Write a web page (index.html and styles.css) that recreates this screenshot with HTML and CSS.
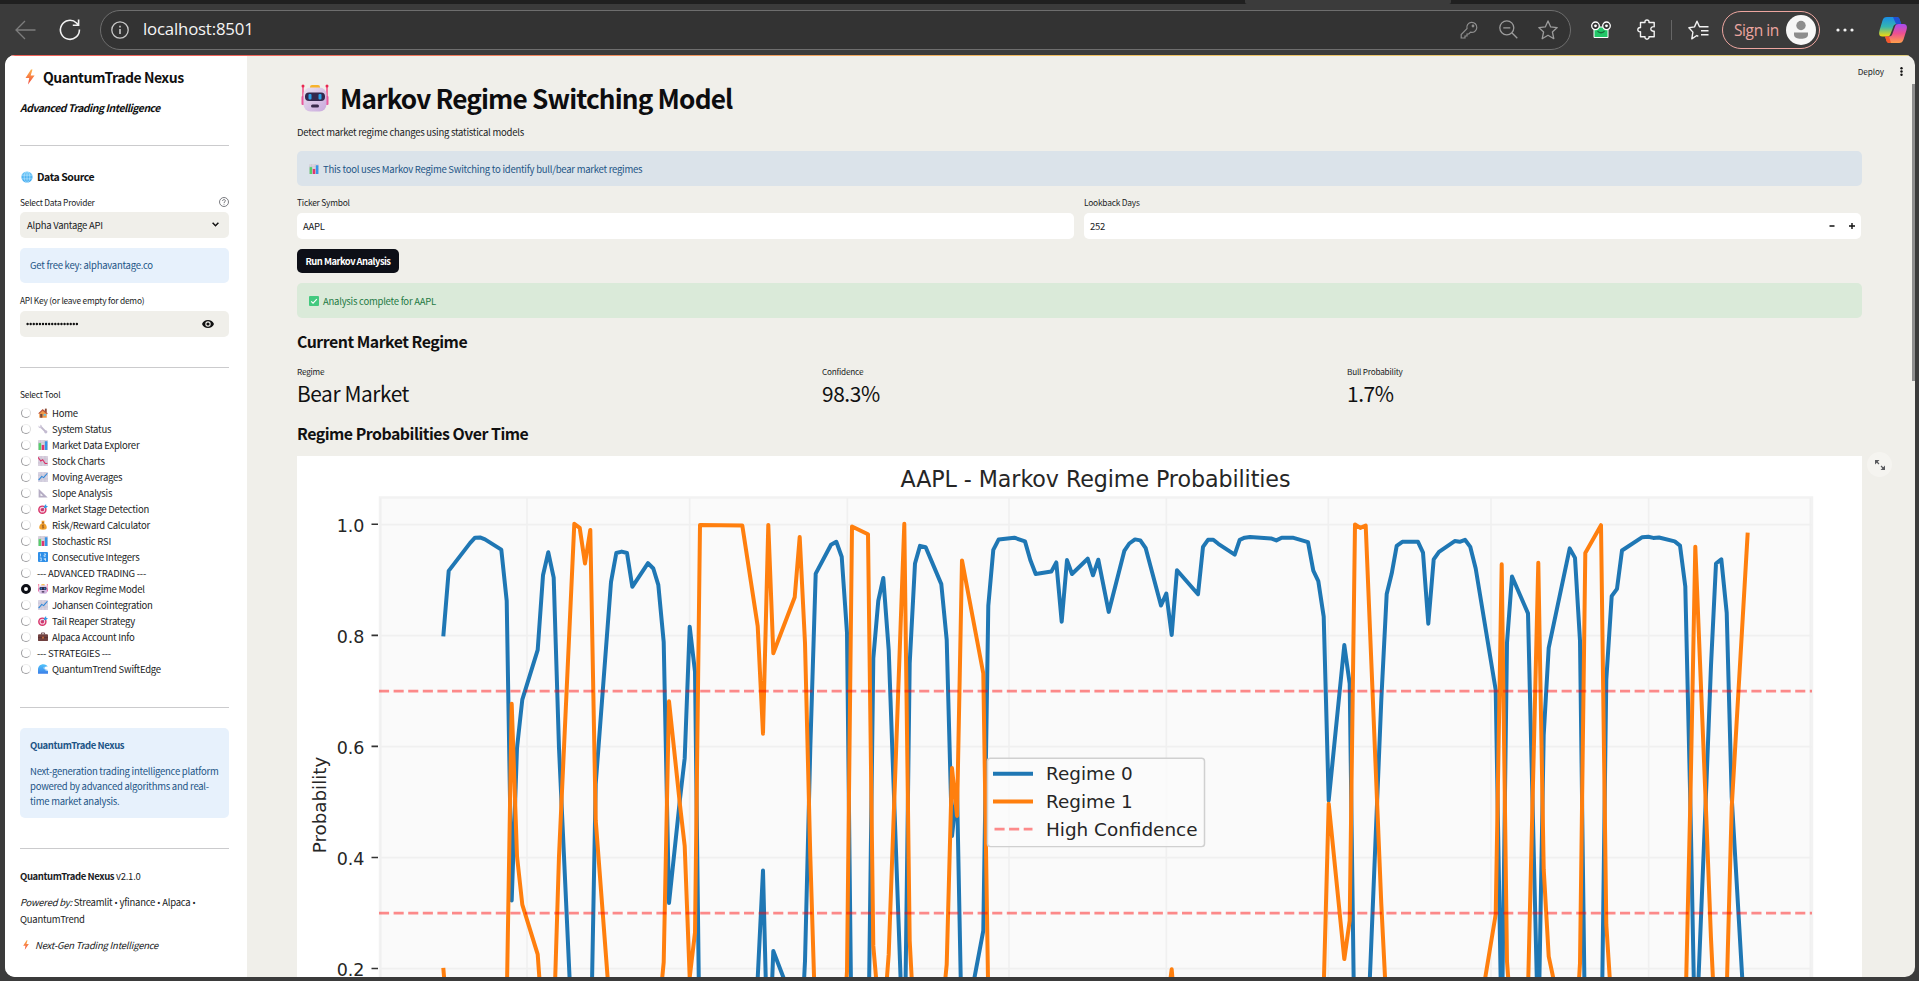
FILE: index.html
```html
<!DOCTYPE html>
<html lang="en">
<head>
<meta charset="utf-8">
<title>QuantumTrade Nexus</title>
<link rel="stylesheet" href="styles.css">
</head>
<body>
<svg class="defs" aria-hidden="true">
  <linearGradient id="gBolt" x1="0" y1="0" x2="0" y2="1"><stop offset="0" stop-color="#fcb24a"/><stop offset="1" stop-color="#f2493f"/></linearGradient>
  <linearGradient id="gFace" x1="0" y1="0" x2="1" y2="1"><stop offset="0" stop-color="#e9e2f0"/><stop offset="1" stop-color="#c9a8dc"/></linearGradient>
  <linearGradient id="gGlobe" x1="0" y1="0" x2="0" y2="1"><stop offset="0" stop-color="#6bc5f7"/><stop offset="1" stop-color="#3aa5ee"/></linearGradient>
  <linearGradient id="gWave" x1="0" y1="0" x2="0" y2="1"><stop offset="0" stop-color="#4fc3fb"/><stop offset="1" stop-color="#3b7fe8"/></linearGradient>
  <linearGradient id="gC1" x1="0" y1="0" x2="0" y2="1"><stop offset="0" stop-color="#1a8de6"/><stop offset=".5" stop-color="#35b6b0"/><stop offset="1" stop-color="#f5d90a"/></linearGradient>
  <linearGradient id="gC2" x1="0" y1="0" x2="0" y2="1"><stop offset="0" stop-color="#a64bf0"/><stop offset=".5" stop-color="#ee5090"/><stop offset="1" stop-color="#ffa04a"/></linearGradient>
  <symbol id="bolt" viewBox="0 0 16 16"><path d="M9 .5 3.500 9h3.700L6 15.500 12.600 6.500H8.700L10.500.5Z" fill="url(#gBolt)"/></symbol>
  <symbol id="robot" viewBox="0 0 28 28"><path d="M2 2v18M26 2v18" stroke="#f0407f" stroke-width="1.400"/><circle cx="2" cy="2" r="1.500" fill="#e8284f"/><circle cx="26" cy="2" r="1.500" fill="#e8284f"/><rect x=".5" y="12" width="4" height="9" rx="1" fill="#e8589c"/><rect x="23.500" y="12" width="4" height="9" rx="1" fill="#e8589c"/><rect x="9" y="1" width="10" height="5" rx="2" fill="#f7b32b"/><rect x="2.500" y="3.500" width="23" height="24" rx="7" fill="url(#gFace)"/><rect x="4" y="8.500" width="20" height="8.500" rx="4" fill="#33294d"/><rect x="7.500" y="10" width="3" height="5.500" rx="1" fill="#2ba0e6"/><rect x="17.500" y="10" width="3" height="5.500" rx="1" fill="#2ba0e6"/><rect x="10" y="20.500" width="8" height="3" rx="1.500" fill="#3a2b4d"/></symbol>
  <symbol id="globe" viewBox="0 0 16 16"><circle cx="8" cy="8" r="7.500" fill="url(#gGlobe)"/><g fill="none" stroke="#c4edff" stroke-width=".8"><path d="M1 5.500h14M1 10.500h14M8 .5v15"/><ellipse cx="8" cy="8" rx="3.800" ry="7.500"/></g></symbol>
  <symbol id="bars" viewBox="0 0 16 16"><rect width="16" height="16" rx="1" fill="#d8d3de"/><path d="M0 4h16M0 8h16M4 0v16M10 0v16" stroke="#bfb9c9" stroke-width=".5"/><rect x="1" y="5" width="4" height="11" fill="#55cf6a"/><rect x="6" y="8" width="4" height="8" fill="#e0356f"/><rect x="11" y="2" width="4" height="14" fill="#3694e8"/></symbol>
  <symbol id="down" viewBox="0 0 16 16"><rect width="16" height="16" rx="1" fill="#d8d0de"/><path d="M0 5h16M0 11h16M5 0v16M11 0v16" stroke="#beb5c9" stroke-width=".7"/><path d="m0 2 4.500 6 3-2 4 6H15" fill="none" stroke="#db2e65" stroke-width="1.800"/></symbol>
  <symbol id="up" viewBox="0 0 16 16"><rect width="16" height="16" rx="1" fill="#d8d3e2"/><path d="M0 5h16M0 11h16M5 0v16M11 0v16" stroke="#bdb8cc" stroke-width=".7"/><path d="m1 13 5-6 3 2 6-7" fill="none" stroke="#2c86d8" stroke-width="1.800"/></symbol>
  <symbol id="home" viewBox="0 0 16 16"><path d="M2 8v7.500h12V8L8 3Z" fill="#f09a4a"/><path d="M11 1h3v6h-3z" fill="#8a4b36"/><path d="m.5 8.500 7-7 8 7-1 1.500-7-5.500-6 5Z" fill="#b8513a"/><rect x="3.500" y="9.500" width="3.500" height="6" fill="#7b4536"/><rect x="9" y="9.500" width="3.500" height="3" fill="#62c4e8"/></symbol>
  <symbol id="wrench" viewBox="0 0 16 16"><path d="m4 4 8.500 8.500" stroke="#c0b8cc" stroke-width="3" stroke-linecap="round"/><circle cx="3.500" cy="4" r="2.800" fill="#cfc8da"/><circle cx="12.500" cy="12.500" r="2.500" fill="#c4bcd2"/><circle cx="2.300" cy="2.600" r="1.400" fill="#fff"/></symbol>
  <symbol id="ruler" viewBox="0 0 16 16"><path fill-rule="evenodd" d="M1 1v14h14.500ZM4 8.500l4 4H4Z" fill="#b5adc4"/></symbol>
  <symbol id="target" viewBox="0 0 16 16"><circle cx="7" cy="9" r="6.800" fill="#d8356b"/><circle cx="7" cy="9" r="4.500" fill="#f3d4e2"/><circle cx="7" cy="9" r="2.800" fill="#d8356b"/><path d="M7 9 13 3" stroke="#4a6ea8"/><path d="m10 3 3-3v3h3l-3 3.500h-3Z" fill="#2f9de8"/></symbol>
  <symbol id="bag" viewBox="0 0 16 16"><path d="M5.500 1h5L9.500 5c3 1.500 4.500 4 4.500 7 0 2.500-1.500 3.500-6 3.500S2 14.500 2 12c0-3 1.500-5.500 4.500-7Z" fill="#f0a12c"/><path d="M6 4.500h4" stroke="#8a4b20" stroke-width="1.300"/><path d="M9.500 8.500C7 7.500 6 10 8 10.500s1.500 2.800-1.500 2M8 7.500v6" fill="none" stroke="#8a4b20"/></symbol>
  <symbol id="nums" viewBox="0 0 16 16"><rect width="16" height="16" rx="1.500" fill="#2f8fe8"/><path d="M4 2.500v4.500M9.500 3h2.500v2H9.700v2h2.500M3 9.500h2.500l-1 2 1 .5v2H3M10 9.500v2.500h2.500M12 9.500v5" fill="none" stroke="#e4f3ff" stroke-width="1.100"/></symbol>
  <symbol id="case" viewBox="0 0 16 16"><path d="M5.500 4V1.500h5V4" fill="none" stroke="#5a3038" stroke-width="1.300"/><rect y="3.500" width="16" height="11" rx="1.500" fill="#70403f"/><path d="M0 9h16" stroke="#4c282d"/><rect x="6.500" y="7.500" width="3" height="3" fill="#c46b3d"/></symbol>
  <symbol id="wave" viewBox="0 0 16 16"><path d="M0 15.500V9C0 4 3.500.5 8.500.5c3.500 0 6 1.500 7 4-2-1.200-4-.8-4.500 1-.5 2 1.500 4 5 4v6Z" fill="url(#gWave)"/><path d="M10.500 4.500c-2 2 0 5.500 5.500 6" fill="none" stroke="#e8f7ff" stroke-width="1.200"/></symbol>
  <symbol id="check" viewBox="0 0 16 16"><rect width="16" height="16" rx="1.500" fill="#43c97f"/><path d="m3.500 8.500 3 3 6-6.500" fill="none" stroke="#fff" stroke-width="1.800"/></symbol>
</svg>

<header class="browser">
  <div class="tabs"><div class="tab-active"></div></div>
  <div class="toolbar">
    <svg class="i-back" width="21" height="20" viewBox="0 0 21 20" fill="none" stroke="#7d7d7d" stroke-width="1.300"><path d="M20.500 10H1M10 1 1 10l9 9"/></svg>
    <svg class="i-reload" width="22" height="22" viewBox="0 0 22 22" fill="none" stroke="#f2f2f2" stroke-width="1.600"><path d="M20.400 10.500A9.500 9.500 0 1 1 17.500 4L19.500 6M19.600.5v5.800h-5.800"/></svg>
    <div class="address">
      <svg width="18" height="18" viewBox="0 0 18 18" fill="none" stroke="#c9c9c9" stroke-width="1.300"><circle cx="9" cy="9" r="8.200"/><path d="M9 8v5M9 4.800v1.700" stroke-width="1.600"/></svg>
      <span class="url">localhost:8501</span>
      <svg class="i-key" width="18" height="18" viewBox="0 0 18 18" fill="none" stroke="#8f8f8f" stroke-width="1.200"><path d="M7 7.700a5 5 0 1 1 3.600 3.500L8.800 13H7v2H5v2H1.200v-3.400Z"/><circle cx="13" cy="5" r=".8" fill="#8f8f8f"/></svg>
      <svg class="i-zoom" width="19" height="19" viewBox="0 0 19 19" fill="none" stroke="#9c9c9c" stroke-width="1.300"><circle cx="7.800" cy="7.800" r="7"/><path d="m12.800 12.800 5.500 5.500M4.300 7.800h7"/></svg>
      <svg class="i-star" width="20" height="20" viewBox="0 0 20 20" fill="none" stroke="#9c9c9c" stroke-width="1.300" stroke-linejoin="round"><path d="m10 .9 2.700 6 6.500.7-4.800 4.400 1.400 6.700L10 15.300l-5.800 3.400L5.600 12 .8 7.600l6.500-.7Z"/></svg>
    </div>
    <svg class="i-frog" width="20" height="18" viewBox="0 0 20 18"><path d="M3 6h14v10.500H3Z" fill="#22c768" stroke="#fff" stroke-width="1"/><path d="M6.500 10c1.500 2.300 5.500 2.300 7 0" fill="none" stroke="#17703c" stroke-width="1.300"/><g fill="#333" stroke="#fff" stroke-width="1.300"><circle cx="4.500" cy="4.800" r="3.800"/><circle cx="15.500" cy="4.800" r="3.800"/></g><circle cx="4.500" cy="4.800" r="1.400" fill="#fff"/><circle cx="15.500" cy="4.800" r="1.400" fill="#fff"/></svg>
    <svg class="i-puzzle" width="19" height="21" viewBox="0 0 19 21" fill="none" stroke="#f2f2f2" stroke-width="1.400" stroke-linejoin="round"><path d="M3.500 3.500H8c-.6-3.400 4.500-3.400 4 0h5.200v4.200c-4.500-.6-4.500 5 0 4.500v5.600H12c.5 3.200-4.600 3.200-4 0H3.500v-5c-3.600.5-3.600-4.700 0-4.200Z"/></svg>
    <div class="sep"></div>
    <svg class="i-fav" width="21" height="20" viewBox="0 0 21 20" fill="none" stroke="#f2f2f2" stroke-width="1.400" stroke-linejoin="round"><path d="M10.300 16.400 8.800 15.500l-5 3.300 1.100-6.700L.9 7.700l5.600-.8L9 1.200l2.500 5.500h9M13 10.700h7.500M13 14.800h7.500"/></svg>
    <div class="signin"><span>Sign in</span><svg width="30" height="30" viewBox="0 0 30 30"><circle cx="15" cy="15" r="15" fill="#f7f7f7"/><circle cx="15" cy="10.500" r="4.700" fill="#8d8d8d"/><path d="M8 17.500h14v2c0 3-3 4.300-7 4.300s-7-1.300-7-4.300Z" fill="#8d8d8d"/></svg></div>
    <svg class="i-dots" width="18" height="4" viewBox="0 0 18 4" fill="#f2f2f2"><circle cx="2" cy="2" r="1.600"/><circle cx="9" cy="2" r="1.600"/><circle cx="16" cy="2" r="1.600"/></svg>
    <svg class="i-copilot" width="28" height="26" viewBox="0 0 28 26"><path d="M8 0h9c3 0 3.500 2 4 4l1 3h-4c-2.500 0-3.500 1.500-4 3.500L11.500 17c-.6 1.700-1.500 2.500-3.500 2.500H3.500C0 19.500-.4 17 .5 13.500L3.500 3.500C4.300 1 5.500 0 8 0Z" fill="url(#gC1)"/><path d="M14 0h4c2 0 2.800 2 3.300 4l1 3H17Z" fill="#2151d4"/><path d="M20 26h-9c-3 0-3.500-2-4-4l-1-2.500h4c2 0 3-1 3.500-3l2.500-7c.6-1.700 1.500-2.500 3.500-2.500h5c3.500 0 3.900 2.500 3 6l-3 9.500c-.8 2.500-2 3.500-4.500 3.500Z" fill="url(#gC2)"/><path d="M12 26h-2c-2 0-2.700-2-3.200-4L6 19.500h4Z" fill="#f4572d"/></svg>
  </div>
</header>

<div class="page">
  <aside class="sidebar">
    <h2 class="brand"><svg><use href="#bolt"/></svg>QuantumTrade Nexus</h2>
    <p class="tagline">Advanced Trading Intelligence</p>
    <hr class="rule r1">
    <h3 class="source"><svg><use href="#globe"/></svg>Data Source</h3>
    <div class="label row-label"><span>Select Data Provider</span><svg width="10" height="10" viewBox="0 0 10 10" fill="none" stroke="#6c6d73" stroke-width=".9"><circle cx="5" cy="5" r="4.500"/><path d="M3.600 4c0-2 2.800-1.800 2.800-.2C6.400 4.800 5 4.800 5 6M5 6.800v.9"/></svg></div>
    <div class="field select"><span>Alpha Vantage API</span><svg width="7" height="5" viewBox="0 0 7 5" fill="none" stroke="#111" stroke-width="1.500"><path d="m.6.8 2.900 2.900L6.400.8"/></svg></div>
    <div class="note key">Get free key: alphavantage.co</div>
    <div class="label api">API Key (or leave empty for demo)</div>
    <div class="field password"><svg width="53" height="4" viewBox="0 0 53 4"><path d="M1.600 2h51" stroke="#111" stroke-width="2.400" stroke-linecap="round" stroke-dasharray="0 3.080"/></svg><svg width="12" height="8" viewBox="0 0 12 8"><path fill-rule="evenodd" d="M6 0c2.700 0 5 1.600 6 4-1 2.400-3.300 4-6 4S1 6.400 0 4C1 1.600 3.300 0 6 0Zm0 1.300a2.700 2.700 0 1 0 0 5.400 2.700 2.700 0 0 0 0-5.400Z" fill="#111"/><circle cx="6" cy="4" r="1.600" fill="#111"/></svg></div>
    <hr class="rule r2">
    <div class="label tool-label">Select Tool</div>
    <ul class="tools">
      <li><i></i><svg><use href="#home"/></svg>Home</li>
      <li><i></i><svg><use href="#wrench"/></svg>System Status</li>
      <li><i></i><svg><use href="#bars"/></svg>Market Data Explorer</li>
      <li><i></i><svg><use href="#down"/></svg>Stock Charts</li>
      <li><i></i><svg><use href="#up"/></svg>Moving Averages</li>
      <li><i></i><svg><use href="#ruler"/></svg>Slope Analysis</li>
      <li><i></i><svg><use href="#target"/></svg>Market Stage Detection</li>
      <li><i></i><svg><use href="#bag"/></svg>Risk/Reward Calculator</li>
      <li><i></i><svg><use href="#bars"/></svg>Stochastic RSI</li>
      <li><i></i><svg><use href="#nums"/></svg>Consecutive Integers</li>
      <li class="group"><i></i>--- ADVANCED TRADING ---</li>
      <li class="on"><i></i><svg><use href="#robot"/></svg>Markov Regime Model</li>
      <li><i></i><svg><use href="#up"/></svg>Johansen Cointegration</li>
      <li><i></i><svg><use href="#target"/></svg>Tail Reaper Strategy</li>
      <li><i></i><svg><use href="#case"/></svg>Alpaca Account Info</li>
      <li class="group"><i></i>--- STRATEGIES ---</li>
      <li><i></i><svg><use href="#wave"/></svg>QuantumTrend SwiftEdge</li>
    </ul>
    <hr class="rule r3">
    <div class="note about"><b>QuantumTrade Nexus</b><p>Next-generation trading intelligence platform<br>powered by advanced algorithms and real-<br>time market analysis.</p></div>
    <hr class="rule r4">
    <p class="version"><b>QuantumTrade Nexus</b> v2.1.0</p>
    <p class="powered"><em>Powered by:</em> Streamlit <s>•</s> yfinance <s>•</s> Alpaca <s>•</s><br>QuantumTrend</p>
    <p class="nextgen"><svg><use href="#bolt"/></svg><em>Next-Gen Trading Intelligence</em></p>
  </aside>

  <main class="main">
    <div class="actions"><span>Deploy</span><svg width="3" height="9" viewBox="0 0 3 9" fill="#111"><circle cx="1.500" cy="1.300" r="1.200"/><circle cx="1.500" cy="4.500" r="1.200"/><circle cx="1.500" cy="7.700" r="1.200"/></svg></div>
    <div class="scrollbar"></div>
    <h1><svg><use href="#robot"/></svg><span>Markov Regime Switching Model</span></h1>
    <p class="caption">Detect market regime changes using statistical models</p>
    <div class="alert info"><svg><use href="#bars"/></svg>This tool uses Markov Regime Switching to identify bull/bear market regimes</div>
    <div class="inputs">
      <div><div class="label">Ticker Symbol</div><div class="box">AAPL</div></div>
      <div><div class="label">Lookback Days</div><div class="box num"><span>252</span><svg width="26" height="6" viewBox="0 0 26 6" stroke="#111" stroke-width="1.400"><path d="M.5 3h5M20 3h6M23 0v6"/></svg></div></div>
    </div>
    <button class="run">Run Markov Analysis</button>
    <div class="alert success"><svg><use href="#check"/></svg>Analysis complete for AAPL</div>
    <h3 class="sub s1">Current Market Regime</h3>
    <div class="metrics">
      <div><span>Regime</span><strong>Bear Market</strong></div>
      <div><span>Confidence</span><strong>98.3%</strong></div>
      <div><span>Bull Probability</span><strong>1.7%</strong></div>
    </div>
    <h3 class="sub s2">Regime Probabilities Over Time</h3>
    <div class="chart-wrap">
      <svg class="chart" width="1565" height="521" viewBox="297 456 1565 521">
        <rect x="297" y="456" width="1565" height="530" fill="#fff"/>
        <rect x="380" y="497.500" width="1432" height="600" fill="#fafafa" stroke="#f2f2f2" stroke-width="2.500"/>
        <path d="M381 524.600h1431M381 635.600h1431M381 746.600h1431M381 857.600h1431M381 968.600h1431M380.700 498v500M527 498v500M689.700 498v500M847.300 498v500M1009 498v500M1166.300 498v500M1328.300 498v500M1491 498v500M1648.700 498v500M1810.300 498v500" stroke="#f0f0f0" stroke-width="1.700"/>
        <path d="M371.500 524.300h6.500M371.500 635.400h6.500M371.500 746.400h6.500M371.500 857.500h6.500M371.500 968.500h6.500" stroke="#333" stroke-width="1.600"/>
        <g fill="none" stroke-width="4" stroke-linejoin="round">
          <g stroke="#1f77b4">
          <polyline id="regime" points="443.3,636.3 448.7,570.9 470,543.1 475,537.7 480,537.4 485,539.4 501.3,549.6 506.7,600.7 511.7,900.5 517,748.1 522.3,699.6 537.7,649.8 543,575.3 548.3,552.3 553.7,577.7 559,748 574.3,1080.4 579.7,1076.3 585,1040.7 590.3,1074.3 595.7,784 611,582.1 616.3,553 621.7,551.6 627,553 632.3,586.8 648,563.1 653.3,568.5 658.3,584.8 663.7,642 669,903 680,798.9 684.7,758.2 689.7,626.8 695,671.8 700,1079.3 742.3,1078.7 757.7,978.1 763,870.5 768.3,1079.3 773.3,951 794.7,1006.9 799.7,1067.2 805,961.2 810.3,748 815.7,573.6 831,544.8 836.3,541.8 841.7,556.7 847,632.9 852,1077.7 868,1069.9 873.3,658.3 878.3,600.7 883.3,578 888.7,649.8 904.3,1080.4 909.7,663.4 915,563.5 920,545.9 925.7,547.2 941.3,584.1 946.7,639.7 952,836.1 957,788.3 962,1043.8 983.3,930.7 988.3,605.8 993.3,549.9 998.7,539.4 1014.3,537.7 1025,541.4 1030.3,560 1035.7,574 1051.3,571.6 1056.3,562.4 1061.7,621.7 1067,560.1 1072,574 1087.7,558.7 1093,575.3 1098.3,559.7 1108.7,611.9 1124.3,550.9 1129.3,543.5 1135,539.4 1140.3,540.4 1145.7,548.2 1161,605.5 1166.3,593.6 1171.7,634.9 1177,570.2 1198,594.3 1203,546.9 1208,539.8 1213.3,539.8 1218.3,543.8 1234.7,554.7 1239.7,539.8 1244.7,537.7 1250,537 1271,538.4 1276.3,540.4 1281.7,537.7 1292.7,537.7 1308,542.1 1313.3,570.6 1318.3,581.1 1323.7,616.6 1328.7,800.5 1344.3,645.1 1349.7,683.7 1355,1079.7 1360.3,1076.3 1365.7,1078.7 1381.3,700 1386.7,593.9 1391.7,573.6 1396.7,545.9 1402.3,541.8 1418,541.8 1423,552.6 1428.3,623.7 1433.7,559.4 1439,551.9 1454.7,541.1 1459.7,541.8 1465,539.8 1470.3,546.9 1475.7,568.5 1495.7,690 1501.7,1040 1507,642.6 1512,576.5 1528,613.4 1538.3,1041.4 1543.7,735 1548.7,647.9 1569.7,548.4 1575,557.9 1580,640.8 1585.3,1051.2 1601,1079 1606.3,679.5 1611.7,596.2 1617,588.8 1622,550.5 1642.3,537.2 1648.3,536.8 1653.3,537.9 1659,537.5 1674.7,541.4 1680,545.6 1685.3,586.4 1690.5,810 1695.3,1057.5 1705.7,802 1711,665.4 1716,563.5 1721.3,559.3 1726.7,612.7 1731.7,797 1747.7,1071.6"/>
          </g>
          <use href="#regime" stroke="#ff7f0e" transform="matrix(1 0 0 -1 0 1604.2)"/>
        </g>
        <path d="M379 691.100h1433M379 913.100h1433" stroke="#ff0000" stroke-opacity=".45" stroke-width="2.700" stroke-dasharray="10.100 4.500"/>
        <rect x="987.500" y="758" width="217" height="82" rx="3" fill="none"/>
        <rect x="987.500" y="753.500" width="217" height="93" rx="3" fill="#fafafa" fill-opacity=".85" stroke="#d0d0d0" stroke-width="1.500" transform="translate(0 .3) translate(0 758) scale(1 .95) translate(0 -753.500)"/>
        <path d="M993 773.700h40" stroke="#1f77b4" stroke-width="4"/>
        <path d="M993 801.500h40" stroke="#ff7f0e" stroke-width="4"/>
        <path d="M994.500 829.200h38" stroke="#ff0000" stroke-opacity=".45" stroke-width="2.700" stroke-dasharray="10.100 4.500"/>
        <g class="plot-text">
          <text x="1095.500" y="486.500" text-anchor="middle" font-size="22.200" textLength="390">AAPL - Markov Regime Probabilities</text>
          <g font-size="18.400">
            <text x="1046" y="780.200">Regime 0</text><text x="1046" y="807.900">Regime 1</text><text x="1046" y="835.600">High Confidence</text>
          </g>
          <g font-size="17.500" text-anchor="end">
            <text x="364.500" y="532">1.0</text><text x="364.500" y="643">0.8</text><text x="364.500" y="754">0.6</text><text x="364.500" y="865">0.4</text><text x="364.500" y="975.800">0.2</text>
          </g>
          <text transform="translate(325.500 805) rotate(-90)" text-anchor="middle" font-size="18.300">Probability</text>
        </g>
      </svg>
      <div class="expand"><svg width="10" height="10" viewBox="0 0 10 10" fill="#5a5b5f" stroke="#5a5b5f" stroke-width="1.200"><path d="m1 1 3 3M6 6l3 3"/><path stroke="none" d="M0 0h4.500L0 4.500ZM10 10H5.500L10 5.500Z"/></svg></div>
    </div>
  </main>
</div>
</body>
</html>
```

FILE: styles.css
```css
* { box-sizing: border-box; margin: 0; padding: 0; }
body {
  width: 1919px; height: 981px; overflow: hidden; background: #3b3b3b; color: #1a1c24;
  font-family: "Noto Sans CJK SC", "Noto Sans", sans-serif; font-size: 9.500px; line-height: 16px; letter-spacing: -.24px;
}
.defs { position: absolute; width: 0; height: 0; }
b { font-weight: 600; letter-spacing: -.4px; }

/* browser chrome */
.browser { height: 55px; font-family: "Open Sans", "Noto Sans", sans-serif; }
.tabs { height: 4px; background: #202020; }
.tab-active { width: 206px; height: 4px; margin-left: 1245px; background: #3b3b3b; border-radius: 0 0 2px 2px; }
.toolbar { height: 51px; display: flex; align-items: center; }
.i-back { margin-left: 15px; }
.i-reload { margin-left: 23px; }
.address { width: 1471px; height: 40px; margin-left: 19px; border: 1px solid #6e6e6e; border-radius: 20px; background: #333; display: flex; align-items: center; padding-left: 10px; }
.url { margin-left: 14px; font-size: 16.800px; color: #f5f5f5; flex: 1; letter-spacing: -.18px; line-height: 30px; padding-bottom: 1px; }
.i-zoom { margin-left: 21px; }
.i-star { margin: 0 12px 0 20px; }
.i-frog { margin-left: 20px; }
.i-puzzle { margin-left: 26px; }
.sep { width: 1px; height: 20px; background: #666; margin-left: 15px; }
.i-fav { margin-left: 16px; }
.signin { width: 98px; height: 38px; margin-left: 13px; border: 1.500px solid #eda6a0; border-radius: 19px; display: flex; align-items: center; justify-content: space-between; padding: 0 3px 0 11px; color: #eda6a0; font-size: 15.500px; letter-spacing: -.4px; }
.i-dots { margin-left: 16px; }
.i-copilot { margin-left: 25px; }

/* page */
.page { width: 1910px; height: 922px; margin-left: 5px; border-radius: 10px; overflow: hidden; display: flex; background: #f0efea; }
.sidebar { width: 242px; height: 922px; background: #fff; padding: 0 18px 0 15px; border-top: 1px solid #f0645a; }
.main { position: relative; flex: 1; height: 922px; padding: 0 53px 0 50px; border-top: 1px solid #e8c468; }
.main::before { content: ""; position: absolute; left: 0; right: 0; top: -1px; height: 1px; background: linear-gradient(90deg, #f0645a, #f0c060 50%, #e2cf80); }
.label { font-size: 8.400px; height: 12px; line-height: 11px; letter-spacing: -.22px; }
.rule { border: 0; border-top: 1px solid #cbcbcd; }

.brand { display: flex; align-items: center; height: 24px; margin-top: 9px; font-size: 14px; font-weight: 600; line-height: 24px; letter-spacing: -.48px; color: #111; white-space: nowrap; }
.brand svg { width: 16px; height: 16px; margin: 0 5px 0 2px; }
.tagline { height: 16px; margin-top: 11px; font-size: 10.400px; font-weight: 600; font-style: italic; letter-spacing: -.47px; color: #111; }
.r1 { margin-top: 29px; }
.source { display: flex; align-items: center; height: 18px; margin-top: 22px; font-size: 10.500px; font-weight: 600; letter-spacing: -.42px; line-height: 18px; color: #111; }
.source svg { width: 12px; height: 12px; margin: 0 4px 0 1px; }
.row-label { display: flex; justify-content: space-between; align-items: center; margin-top: 10px; }
.field { height: 26px; background: #f0efea; border-radius: 5px; display: flex; align-items: center; justify-content: space-between; }
.select { margin-top: 4px; padding: 0 10px 1px 7px; }
.note { background: #e7f1fc; border-radius: 5px; color: #1d5586; }
.key { height: 35px; margin-top: 10px; padding-left: 10px; line-height: 35px; }
.api { margin-top: 12px; }
.password { margin-top: 4px; padding: 0 15px 0 6px; }
.r2 { margin-top: 30px; }
.tool-label { margin-top: 21px; }
.tools { list-style: none; margin-top: 4px; }
.tools li { display: flex; align-items: center; height: 16px; white-space: nowrap; }
.tools i { width: 10px; height: 10px; border-radius: 50%; margin: 0 7px 0 1px; border: 1px solid #9d9da0; border-top-color: #eee; border-right-color: #ddd; }
.tools svg { width: 10px; height: 10px; margin-right: 4px; }
.tools .group i { margin-right: 6px; }
.tools .on i { border: 3px solid #0d0f17; }
.r3 { margin-top: 30px; }
.about { height: 90px; margin-top: 20px; padding: 10px 10px 0; line-height: 15px; white-space: nowrap; }
.about p { margin-top: 11px; }
.r4 { margin-top: 30px; }
.version { margin-top: 19px; }
.powered { margin-top: 10px; white-space: nowrap; }
.powered s { font-family: "Open Sans", sans-serif; text-decoration: none; }
.nextgen { display: flex; align-items: center; margin-top: 10px; }
.nextgen svg { width: 10px; height: 10px; margin: 0 4px 0 1px; }

/* main column */
.actions { position: absolute; top: 7px; right: 12px; display: flex; align-items: center; gap: 16px; font-size: 8.200px; letter-spacing: -.1px; }
.scrollbar { position: absolute; right: 0; top: 28px; width: 3px; height: 297px; background: #8f8f8f; }
h1 { display: flex; align-items: center; height: 40px; margin-top: 22px; font-size: 26.200px; font-weight: 700; line-height: 40px; letter-spacing: -.86px; color: #0d0d0f; }
h1 svg { width: 28px; height: 28px; margin: 0 11px 0 4px; }
.caption { height: 16px; margin-top: 6px; }
.alert { height: 35px; border-radius: 5px; display: flex; align-items: center; padding: 0 12px; }
.alert svg { width: 10px; height: 10px; margin-right: 4px; }
.info { margin-top: 11px; background: #dbe3ea; color: #1d5586; }
.success { margin-top: 10px; background: #daead9; color: #1f7a45; }
.inputs { display: grid; grid-template-columns: 777px 777px; gap: 10px; margin-top: 11px; }
.box { height: 26px; margin-top: 4px; background: #fff; border-radius: 5px; padding: 0 6px; line-height: 26px; }
.num { display: flex; align-items: center; justify-content: space-between; }
.run { display: block; width: 102px; height: 24px; margin-top: 10px; border: 0; border-radius: 5px; background: #0d0f17; color: #fff; font: 600 9.400px/23px "Noto Sans CJK SC", sans-serif; letter-spacing: -.52px; }
.sub { font-size: 15.900px; font-weight: 600; line-height: 22px; height: 24px; letter-spacing: -.5px; color: #111; }
.s1 { margin-top: 13px; }
.metrics { display: grid; grid-template-columns: 525px 525px 1fr; margin-top: 11px; }
.metrics span { display: block; font-size: 8.200px; line-height: 11px; height: 12px; letter-spacing: -.2px; }
.metrics strong { display: block; font-size: 20.900px; font-weight: 400; line-height: 30px; letter-spacing: -.42px; color: #111; }
.s2 { margin-top: 15px; }
.chart-wrap { position: relative; height: 521px; margin-top: 9px; }
.chart { display: block; }
.plot-text { font-family: "DejaVu Sans", sans-serif; fill: #262626; letter-spacing: 0; }
.expand { position: absolute; left: 1570px; top: -4px; width: 25px; height: 25px; border-radius: 50%; background: #f5f4f0; display: flex; align-items: center; justify-content: center; }
```
